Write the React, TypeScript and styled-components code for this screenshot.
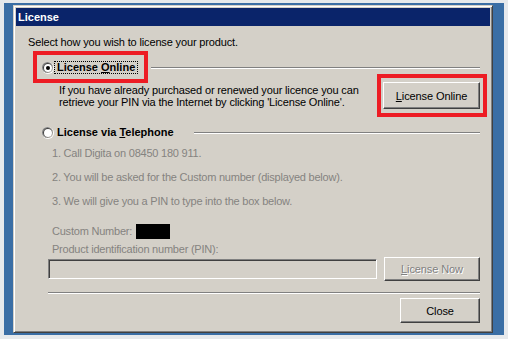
import React from 'react'
import styled, { createGlobalStyle } from 'styled-components'

const GlobalStyle = createGlobalStyle`
	body {
		margin: 0;
		font-family: 'Liberation Sans', Arial, sans-serif;
		font-size: 11px;
	}
`

const Radio: React.FC<{ checked?: boolean }> = ({ checked }) => (
	<RadioIcon width="12" height="12" viewBox="0 0 12 12">
		<circle cx="6" cy="6" r="6" fill="#fff" />
		<circle cx="5.5" cy="5.5" r="5.5" fill="#808080" />
		<circle cx="6" cy="6" r="5" fill="#d4d0c8" />
		<circle cx="5.7" cy="5.7" r="4.7" fill="#404040" />
		<circle cx="6" cy="6" r="4" fill="#fff" />
		{checked && <circle cx="6" cy="6" r="2" fill="#000" />}
	</RadioIcon>
)

const App: React.FC = () => {
	return (
		<Page>
			<GlobalStyle />
			<Desktop>
				<Window>
					<TitleBar>License</TitleBar>
					<Body>
						<Intro>Select how you wish to license your product.</Intro>

						<GroupHeader $top={12}>
							<Highlight $inset="-10px -10px -9px -9px">
								<RadioLabel>
									<Radio checked />
									<OptionText $focused>
										License <u>O</u>nline
									</OptionText>
								</RadioLabel>
							</Highlight>
							<Etched $gap={13} />
						</GroupHeader>

						<OnlineRow>
							<Description>
								If you have already purchased or renewed your licence you can
								<br />
								retrieve your PIN via the Internet by clicking 'License Online'.
							</Description>
							<Highlight $inset="-8px -7px -8px -6px">
								<Button $width={97} $height={27}>
									<u>L</u>icense Online
								</Button>
							</Highlight>
						</OnlineRow>

						<GroupHeader $top={17}>
							<RadioLabel>
								<Radio />
								<OptionText>
									License via <u>T</u>elephone
								</OptionText>
							</RadioLabel>
							<Etched $gap={17} />
						</GroupHeader>

						<Steps>
							<Muted>1. Call Digita on 08450 180 911.</Muted>
							<Muted>2. You will be asked for the Custom number (displayed below).</Muted>
							<Muted>3. We will give you a PIN to type into the box below.</Muted>
						</Steps>

						<CustomRow>
							<CustomLabel>Custom Number:</CustomLabel>
							<Redacted />
						</CustomRow>
						<PinLabel>Product identification number (PIN):</PinLabel>

						<PinRow>
							<PinInput disabled />
							<Button $width={96} $height={24} $disabled>
								<u>L</u>icense Now
							</Button>
						</PinRow>

						<Separator />

						<Footer>
							<Button $width={80} $height={25}>
								Close
							</Button>
						</Footer>
					</Body>
				</Window>
			</Desktop>
		</Page>
	)
}

export default App

const Page = styled.div`
	width: 508px;
	height: 339px;
	box-sizing: border-box;
	padding: 3px 4px 4px 4px;
	background: #e6e9ec;
`

const Desktop = styled.div`
	height: 100%;
	box-sizing: border-box;
	padding: 2px 11px 2px 9px;
	background: #3a6ea5;
`

const Window = styled.div`
	width: 480px;
	height: 328px;
	box-sizing: border-box;
	display: flex;
	flex-direction: column;
	padding: 2px;
	background: #d4d0c8;
	border: 1px solid;
	border-color: #d4d0c8 #404040 #404040 #d4d0c8;
	box-shadow: inset 1px 1px #fff, inset -1px -1px #808080;
`

const TitleBar = styled.div`
	height: 18px;
	flex-shrink: 0;
	display: flex;
	align-items: center;
	padding-left: 2px;
	background: #0a246a;
	color: #fff;
	font-weight: bold;
	font-size: 11px;
`

const Body = styled.div`
	flex: 1;
	display: flex;
	flex-direction: column;
	padding: 10px 10px 0 12px;
	color: #000;
	line-height: 13px;
	letter-spacing: -0.15px;
`

const Intro = styled.div`
	height: 13px;
	white-space: nowrap;
`

const GroupHeader = styled.div<{ $top: number }>`
	display: flex;
	align-items: center;
	margin-top: ${p => p.$top}px;
	margin-left: 14px;
	height: 13px;
`

const Highlight = styled.div<{ $inset: string }>`
	position: relative;
	flex-shrink: 0;

	&::after {
		content: '';
		position: absolute;
		inset: ${p => p.$inset};
		border: 4px solid #ed1c24;
		pointer-events: none;
	}
`

const RadioLabel = styled.div`
	display: flex;
	align-items: center;
	flex-shrink: 0;
`

const RadioIcon = styled.svg`
	display: block;
	flex-shrink: 0;
`

const OptionText = styled.span<{ $focused?: boolean }>`
	font-weight: bold;
	letter-spacing: 0;
	padding: 0 2px;
	line-height: 11px;
	border: 1px dotted ${p => (p.$focused ? '#000' : 'transparent')};
	white-space: nowrap;

	u {
		text-underline-offset: 1px;
	}
`

const Etched = styled.div<{ $gap: number }>`
	flex: 1;
	margin-left: ${p => p.$gap}px;
	margin-top: 1px;
	height: 0;
	border-top: 1px solid #808080;
	border-bottom: 1px solid #fff;
`

const OnlineRow = styled.div`
	display: flex;
	align-items: flex-start;
	justify-content: space-between;
	margin-top: 8px;
	margin-left: 31px;
`

const Description = styled.div`
	margin-top: 2px;
	line-height: 12px;
	white-space: nowrap;
`

const Button = styled.button<{ $width: number; $height: number; $disabled?: boolean }>`
	display: flex;
	align-items: center;
	justify-content: center;
	width: ${p => p.$width}px;
	height: ${p => p.$height}px;
	padding: 0;
	font-family: inherit;
	font-size: 11px;
	letter-spacing: -0.1px;
	background: #d4d0c8;
	color: ${p => (p.$disabled ? '#808080' : '#000')};
	text-shadow: ${p => (p.$disabled ? '1px 1px #fff' : 'none')};
	border: 1px solid;
	border-color: #fff #404040 #404040 #fff;
	box-shadow: inset -1px -1px #808080;
	cursor: default;
`

const Steps = styled.div`
	display: flex;
	flex-direction: column;
	gap: 11px;
	margin-top: 8px;
	margin-left: 24px;
`

const Muted = styled.div`
	color: #858380;
	letter-spacing: -0.22px;
	white-space: nowrap;
`

const CustomRow = styled.div`
	display: flex;
	align-items: center;
	gap: 6px;
	height: 15px;
	margin-top: 16px;
	margin-left: 24px;
`

const CustomLabel = styled(Muted)`
	width: 78px;
`

const Redacted = styled.div`
	width: 34px;
	height: 15px;
	background: #000;
`

const PinLabel = styled(Muted)`
	margin-top: 4px;
	margin-left: 24px;
`

const PinRow = styled.div`
	display: flex;
	align-items: center;
	gap: 7px;
	margin-top: 1px;
	margin-left: 20px;
`

const PinInput = styled.input`
	width: 329px;
	height: 20px;
	box-sizing: border-box;
	padding: 0;
	background: #d4d0c8;
	border: 1px solid;
	border-color: #808080 #fff #fff #808080;
	box-shadow: inset 1px 1px #404040, inset -1px -1px #d4d0c8;
`

const Separator = styled.div`
	margin-top: 11px;
	margin-left: 20px;
	height: 0;
	border-top: 1px solid #808080;
	border-bottom: 1px solid #fff;
`

const Footer = styled.div`
	display: flex;
	justify-content: flex-end;
	margin-top: 4px;
`
